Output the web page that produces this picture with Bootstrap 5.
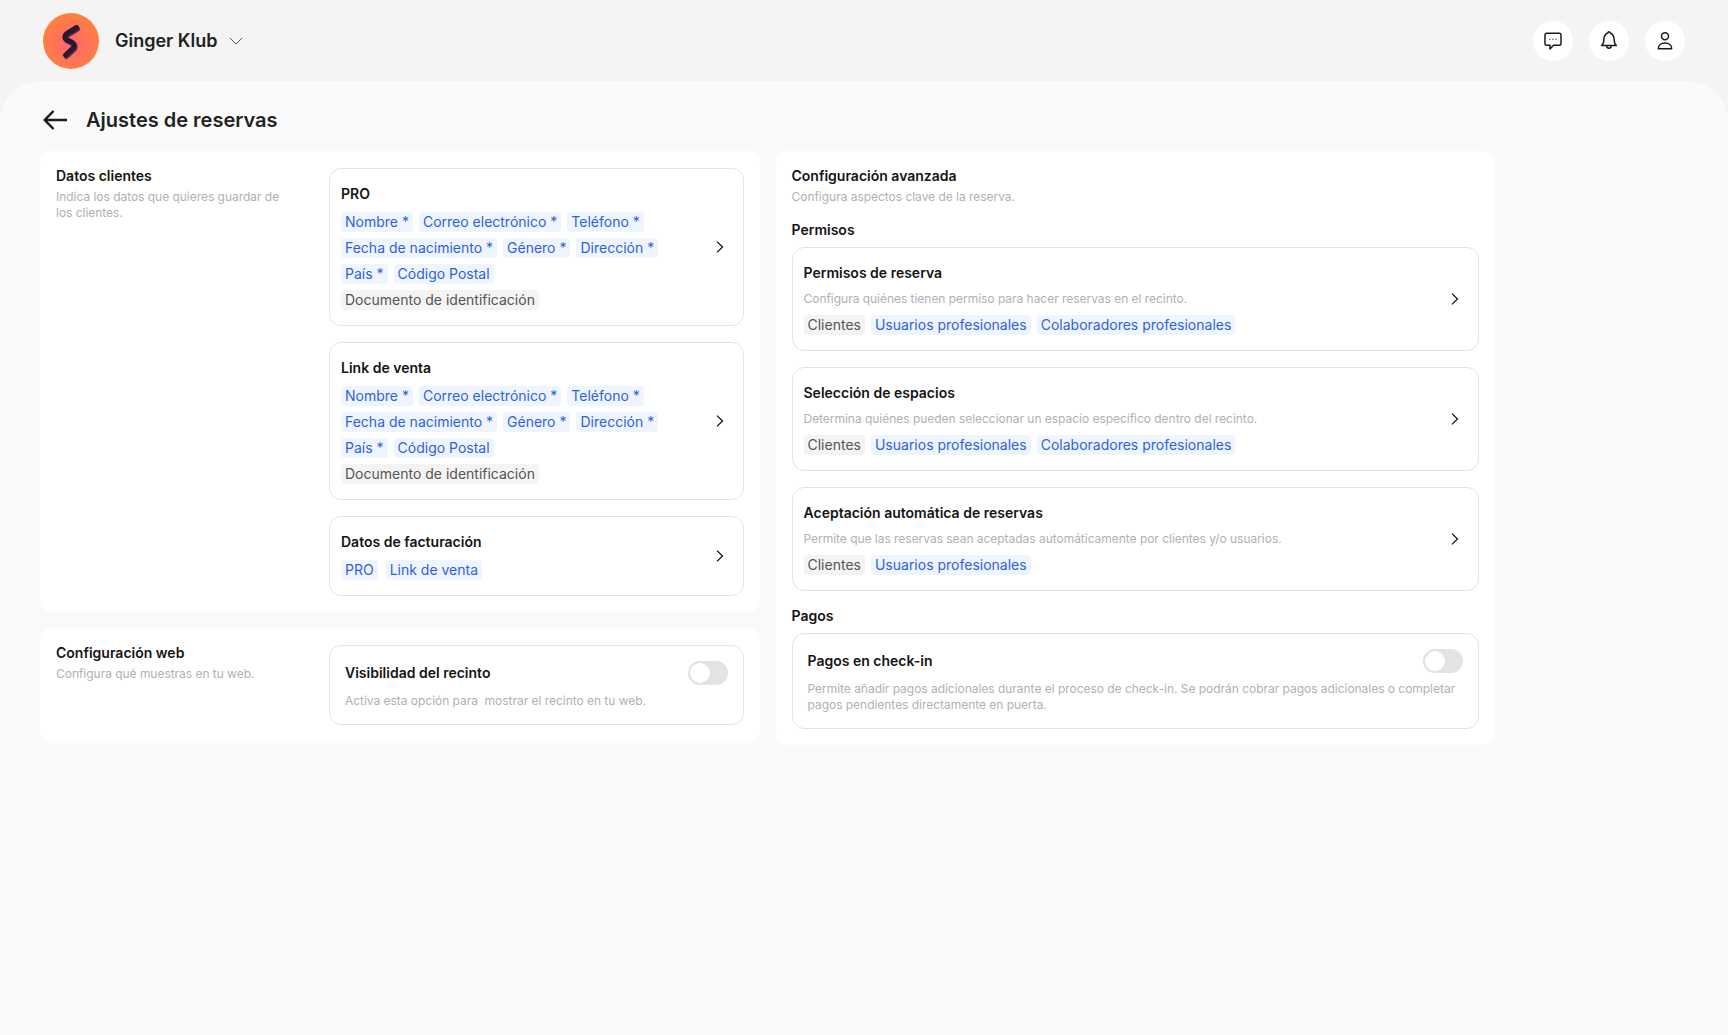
<!DOCTYPE html>
<html lang="es">
<head>
    <meta charset="UTF-8">
    <meta name="viewport" content="width=device-width, initial-scale=1.0">
    <title>Ajustes de reservas</title>
    <link href="https://cdn.jsdelivr.net/npm/bootstrap@5.3.0/dist/css/bootstrap.min.css" rel="stylesheet">
    <style>
        body { font-family: "Inter", "Liberation Sans", sans-serif; background: #f4f4f4; color: #141414; min-height: 1035px; }
        .top-bar { height: 81px; padding: 0 43px; }
        .brand-logo { width: 56px; height: 56px; background: radial-gradient(circle at 50% 55%, #ff6570 0%, #ff7f41 70%); }
        .brand-name { font-size: 18px; font-weight: 600; line-height: 24px; margin: 0 12px 0 16px; color: #222; }
        .round-btn { width: 40px; height: 40px; background: #fff; border: 0; padding: 0; }
        .main-panel { background: #fafafa; border-radius: 40px 40px 0 0; min-height: 954px; padding: 25px 40px 0 39.5px; }
        .page-title { font-size: 20px; font-weight: 600; line-height: 28px; color: #222; }
        .back-link { margin: 0 19px 0 3.5px; line-height: 0; }
        .cols { display: grid; grid-template-columns: 720px 719px; column-gap: 16px; align-items: start; margin-top: 17px; }
        .white-box { background: #fff; border-radius: 12px; padding: 15px 16px 16px; }
        .box-left { padding-left: 16.5px; }
        .side-col { width: 273px; flex: none; padding-right: 32px; }
        .box-title { font-size: 14px; font-weight: 600; line-height: 20px; margin: 0; color: #141414; }
        .box-sub { font-size: 12px; line-height: 16px; color: #b0b0b6; margin: 3px 0 0; letter-spacing: -.03px; }
        .box-intro { margin-bottom: 15px; }
        .item-col { margin-top: 2px; }
        .item-web { margin: 2px 0 0; }
        .item-box { border: 1px solid #e4e4e4; border-radius: 12px; background: #fff; }
        .item-link { padding: 15px 19px 15px 11px; }
        .item-toggle { padding: 15px 15px 15px; }
        .item-link + .item-link { margin-top: 16px; }
        .data-body { width: 340px; }
        .chip-wrap { display: flex; flex-wrap: wrap; gap: 6px; }
        .chip-wide { gap: 8px; }
        .chip { font-size: 14px; line-height: 20px; padding: 0 4px; border-radius: 4px; background: #eff5ff; color: #2f5fdf; }
        .chip-off { background: #f4f4f4; color: #555; }
        .section-label { font-size: 14px; font-weight: 600; line-height: 20px; margin: 0 0 7px; color: #141414; }
        .pagos-label { margin-top: 15px; }
        .switch-input.form-check-input { width: 40px; height: 24px; margin: 0; border: 0; float: none; background-color: #e3e3e3; background-image: radial-gradient(circle at 12px 12px, #fff 9.5px, transparent 10px); background-position: 0 0; background-size: auto; box-shadow: none; }
    </style>
</head>
<body>
    <!-- Top bar -->
    <header class="top-bar d-flex align-items-center justify-content-between">
        <div class="d-flex align-items-center">
            <div class="brand-logo rounded-circle">
                <svg class="d-block" width="56" height="56" viewBox="0 0 56 56" fill="none" stroke-width="5" stroke-linecap="round">
                    <path d="M34.500 16 25.500 21.500C22 24 22 27 25.500 28.500L29.500 30.500C33 32.500 33 35.500 29.500 38L23.500 43.500" stroke="#5c2a48"/>
                    <path d="M33.500 14.500 24.500 20C21 22.500 21 25.500 24.500 27L28.500 29C32 31 32 34 28.500 36.500L22.500 42" stroke="#2a1730"/>
                </svg>
            </div>
            <span class="brand-name">Ginger Klub</span>
            <svg width="14" height="8" viewBox="0 0 14 8" fill="none" stroke="#555" stroke-width="1"><path d="M1 1l6 6 6-6"/></svg>
        </div>
        <div class="d-flex gap-3">
            <button class="round-btn rounded-circle d-flex align-items-center justify-content-center" aria-label="Mensajes">
                <svg width="18" height="18" viewBox="0 0 18 18" fill="none" stroke="#1c1c1c" stroke-width="1.500" stroke-linejoin="round"><path d="M2.500 1.300h13a1.500 1.500 0 0 1 1.500 1.500v9a1.500 1.500 0 0 1-1.500 1.500H9.500L6 17v-3.700H2.500a1.500 1.500 0 0 1-1.500-1.500v-9a1.500 1.500 0 0 1 1.500-1.500z"/><path d="M5.300 7.300h1.200M8.400 7.300h1.200M11.500 7.300h1.200" stroke-width="1"/></svg>
            </button>
            <button class="round-btn rounded-circle d-flex align-items-center justify-content-center" aria-label="Avisos">
                <svg width="16" height="19" viewBox="0 0 16 19" fill="none" stroke="#1c1c1c" stroke-width="1.500" stroke-linejoin="round"><path d="M.6 14.500h14.800c-1.400-1-2.200-2.500-2.200-5.500 0-3.700-1.900-6.200-4.200-7.200a1 1 0 0 0-2 0C4.700 2.800 2.800 5.300 2.800 9c0 3-.8 4.500-2.200 5.500z"/><path d="M5.800 15a2.200 2.200 0 0 0 4.400 0"/></svg>
            </button>
            <button class="round-btn rounded-circle d-flex align-items-center justify-content-center" aria-label="Perfil">
                <svg width="16" height="18" viewBox="0 0 16 18" fill="none" stroke="#1c1c1c" stroke-width="1.500" stroke-linejoin="round"><circle cx="8" cy="4.300" r="3.500"/><path d="M1.300 16.800c0-3.500 2.800-5.800 6.700-5.800s6.700 2.300 6.700 5.800z"/></svg>
            </button>
        </div>
    </header>

    <main class="main-panel">
        <div class="d-flex align-items-center">
            <a href="#" class="back-link" aria-label="Volver">
                <svg width="24" height="20" viewBox="0 0 24 20" fill="none" stroke="#1c1c1c" stroke-width="2.500"><path d="M24 10H2M10.500 1 1.800 10l8.700 9"/></svg>
            </a>
            <h1 class="page-title mb-0">Ajustes de reservas</h1>
        </div>

        <div class="cols">
            <!-- Left column -->
            <div class="d-flex flex-column gap-3">
                <section class="white-box box-left d-flex">
                    <div class="side-col">
                        <h2 class="box-title">Datos clientes</h2>
                        <p class="box-sub">Indica los datos que quieres guardar de los clientes.</p>
                    </div>
                    <div class="flex-grow-1 item-col" id="dataCards"></div>
                </section>
                <section class="white-box box-left d-flex">
                    <div class="side-col">
                        <h2 class="box-title">Configuración web</h2>
                        <p class="box-sub">Configura qué muestras en tu web.</p>
                    </div>
                    <div class="flex-grow-1 item-box item-toggle item-web">
                        <div class="d-flex justify-content-between align-items-center">
                            <h3 class="box-title">Visibilidad del recinto</h3>
                            <input class="form-check-input switch-input rounded-pill" type="checkbox" role="switch" aria-label="Visibilidad del recinto">
                        </div>
                        <p class="box-sub mt-2 mb-0">Activa esta opción para&nbsp; mostrar el recinto en tu web.</p>
                    </div>
                </section>
            </div>

            <!-- Right column -->
            <section class="white-box">
                <h2 class="box-title">Configuración avanzada</h2>
                <p class="box-sub box-intro">Configura aspectos clave de la reserva.</p>
                <h3 class="section-label">Permisos</h3>
                <div id="permCards"></div>
                <h3 class="section-label pagos-label">Pagos</h3>
                <div class="item-box item-toggle">
                    <div class="d-flex justify-content-between align-items-center">
                        <h4 class="box-title">Pagos en check-in</h4>
                        <input class="form-check-input switch-input rounded-pill" type="checkbox" role="switch" aria-label="Pagos en check-in">
                    </div>
                    <p class="box-sub mt-2 mb-0">Permite añadir pagos adicionales durante el proceso de check-in. Se podrán cobrar pagos adicionales o completar pagos pendientes directamente en puerta.</p>
                </div>
            </section>
        </div>
    </main>

    <script>
        var chevron = '<svg class="flex-shrink-0" width="8" height="12" viewBox="0 0 8 12" fill="none" stroke="#141414" stroke-width="1.300"><path d="M1 .6 6.500 6 1 11.400"/></svg>';

        function chips(on, off) {
            var html = on.map(c => `<span class="chip">${c}</span>`);
            return html.concat(off.map(c => `<span class="chip chip-off">${c}</span>`)).join('');
        }

        var fields = ['Nombre *', 'Correo electrónico *', 'Teléfono *', 'Fecha de nacimiento *', 'Género *', 'Dirección *', 'País *', 'Código Postal'];
        var dataCards = [
            { title: 'PRO', on: fields, off: ['Documento de identificación'] },
            { title: 'Link de venta', on: fields, off: ['Documento de identificación'] },
            { title: 'Datos de facturación', on: ['PRO', 'Link de venta'], off: [], short: true }
        ];
        document.getElementById('dataCards').innerHTML = dataCards.map(c => `
            <div class="item-box item-link d-flex align-items-center justify-content-between">
                <div class="data-body">
                    <h3 class="box-title mb-2">${c.title}</h3>
                    <div class="chip-wrap ${c.short ? 'chip-wide' : ''}">${chips(c.on, c.off)}</div>
                </div>
                ${chevron}
            </div>`).join('');

        var permCards = [
            { title: 'Permisos de reserva', sub: 'Configura quiénes tienen permiso para hacer reservas en el recinto.', on: ['Usuarios profesionales', 'Colaboradores profesionales'] },
            { title: 'Selección de espacios', sub: 'Determina quiénes pueden seleccionar un espacio específico dentro del recinto.', on: ['Usuarios profesionales', 'Colaboradores profesionales'] },
            { title: 'Aceptación automática de reservas', sub: 'Permite que las reservas sean aceptadas automáticamente por clientes y/o usuarios.', on: ['Usuarios profesionales'] }
        ];
        document.getElementById('permCards').innerHTML = permCards.map(c => `
            <div class="item-box item-link d-flex align-items-center justify-content-between">
                <div>
                    <h4 class="box-title">${c.title}</h4>
                    <p class="box-sub mt-2 mb-2">${c.sub}</p>
                    <div class="chip-wrap"><span class="chip chip-off">Clientes</span>${chips(c.on, [])}</div>
                </div>
                ${chevron}
            </div>`).join('');
    </script>
    <script src="https://cdn.jsdelivr.net/npm/bootstrap@5.3.0/dist/js/bootstrap.bundle.min.js"></script>
</body>
</html>
